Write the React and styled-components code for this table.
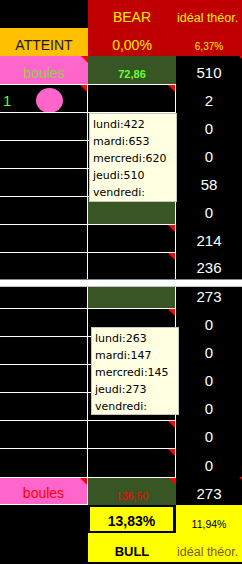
import React from "react";
import styled, { createGlobalStyle, css } from "styled-components";

const GlobalStyle = createGlobalStyle`
  html, body {
    margin: 0;
    padding: 0;
    background: #000;
    overflow: hidden;
  }
  body {
    font-family: "Liberation Sans", Arial, sans-serif;
  }
`;

const Sheet = styled.div`
  position: relative;
  width: 242px;
  height: 564px;
  overflow: hidden;
  background: #000;
`;

const Row = styled.div`
  display: grid;
  grid-template-columns: 88px 88px 66px;
  height: ${(p) => p.$h || 28}px;
`;

const line = "1px solid #fff";

const Cell = styled.div`
  position: relative;
  box-sizing: border-box;
  display: flex;
  align-items: flex-end;
  justify-content: ${(p) => p.$align || "center"};
  padding: 0 0 4px ${(p) => p.$pl || 0}px;
  background: ${(p) => p.$bg || "#000"};
  color: ${(p) => p.$color || "#fff"};
  font-size: ${(p) => p.$size || 15}px;
  font-weight: ${(p) => (p.$bold ? 700 : 400)};
  line-height: 1;
  white-space: nowrap;
  border-top: ${(p) => (p.$bt ? line : "none")};
  border-right: ${(p) => (p.$br ? line : "none")};
  border-bottom: ${(p) => (p.$bb ? line : "none")};

  ${(p) =>
    p.$boxed &&
    css`
      border: 2px solid #000;
      border-right-width: 3px;
      padding-bottom: 3px;
    `}

  ${(p) =>
    p.$note &&
    css`
      &::after {
        content: "";
        position: absolute;
        top: 0;
        right: ${p.$noteOut ? -4 : 0}px;
        width: 0;
        height: 0;
        border-left: 7px solid transparent;
        border-top: 7px solid #ff0000;
      }
    `}
`;

const Split = styled.div`
  box-sizing: border-box;
  height: 8px;
  background: #fff;
  border-top: 1px solid #858585;
  border-bottom: 1px solid #c4c4c4;
`;

const Dot = styled.span`
  position: absolute;
  left: 36px;
  top: 3px;
  width: 27px;
  height: 25px;
  border-radius: 50%;
  background: #ff66cc;
`;

const Comment = styled.div`
  position: absolute;
  left: ${(p) => p.$x}px;
  top: ${(p) => p.$y}px;
  box-sizing: border-box;
  width: 88px;
  height: ${(p) => p.$h}px;
  padding: 2px 3px;
  background: #ffffe1;
  border: 1px solid #c8c8b8;
  font-family: "DejaVu Sans", Tahoma, sans-serif;
  font-size: 11px;
  line-height: 17px;
  color: #000;
  white-space: nowrap;
  overflow: hidden;
`;

const pink = "#ff66cc";
const red = "#c00000";
const green = "#375623";
const yellow = "#ffff00";
const gold = "#ffeb00";

const upper = [
  { v: "2", note: true, dot: true },
  { v: "0" },
  { v: "0" },
  { v: "58" },
  { v: "0", green: true },
  { v: "214", noteB: true },
  { v: "236", noteB: true, h: 27 },
];

const lower = [
  { v: "273", green: true, h: 21, noTop: true },
  { v: "0", noteB: true },
  { v: "0" },
  { v: "0" },
  { v: "0" },
  { v: "0", noteB: true },
  { v: "0", noteB: true, h: 29 },
];

const GridRow = ({ r }) => (
  <Row $h={r.h}>
    <Cell $bt={!r.noTop} $br $note={r.note} $align="flex-start" $pl={3} $color="#5cff3a">
      {r.dot && (
        <>
          1
          <Dot />
        </>
      )}
    </Cell>
    <Cell $bt={!r.noTop} $br $bg={r.green ? green : "#000"} $note={r.note || r.noteB} />
    <Cell>{r.v}</Cell>
  </Row>
);

const Comments = ({ x, y, h, days }) => (
  <Comment $x={x} $y={y} $h={h}>
    {days.map((d, i) => (
      <div key={i}>{d}</div>
    ))}
  </Comment>
);

export default function App() {
  return (
    <Sheet>
      <GlobalStyle />
      <Row>
        <Cell />
        <Cell $bg={red} $color={gold} $size={14}>
          BEAR
        </Cell>
        <Cell $bg={red} $color={gold} $size={12.5} $align="flex-start" $pl={1}>
          idéal théor.
        </Cell>
      </Row>
      <Row>
        <Cell $bg="#ffc000" $color="#1a1a1a" $size={14}>
          ATTEINT
        </Cell>
        <Cell $bg={red} $color={gold} $size={14}>
          0,00%
        </Cell>
        <Cell $bg={red} $color={gold} $size={10}>
          6,37%
        </Cell>
      </Row>
      <Row>
        <Cell $bg={pink} $color="#92d050" $size={14} $note>
          boules
        </Cell>
        <Cell $bg={green} $color="#66ff33" $size={11} $bold>
          72,86
        </Cell>
        <Cell $note $noteOut>
          510
        </Cell>
      </Row>
      {upper.map((r, i) => (
        <GridRow key={"u" + i} r={r} />
      ))}
      <Split />
      {lower.map((r, i) => (
        <GridRow key={"l" + i} r={r} />
      ))}
      <Row>
        <Cell $bt $br $bb $bg={pink} $color="#ff0000" $size={14} $note>
          boules
        </Cell>
        <Cell $bt $bg={green} $color="#ff0000" $size={10.5} $note>
          136,50
        </Cell>
        <Cell $note $noteOut>
          273
        </Cell>
      </Row>
      <Row>
        <Cell />
        <Cell $boxed $bg={yellow} $color="#000" $size={14} $bold>
          13,83%
        </Cell>
        <Cell $bg={yellow} $color="#000" $size={10.5}>
          11,94%
        </Cell>
      </Row>
      <Row $h={29}>
        <Cell />
        <Cell $bg={yellow} $color="#000" $size={13} $bold>
          BULL
        </Cell>
        <Cell $bg={yellow} $color="#7f6000" $size={12.5} $align="flex-start" $pl={1}>
          idéal théor.
        </Cell>
      </Row>

      <Comments
        x={89}
        y={113}
        h={89}
        days={["lundi:422", "mardi:653", "mercredi:620", "jeudi:510", "vendredi:"]}
      />
      <Comments
        x={91}
        y={327}
        h={88}
        days={["lundi:263", "mardi:147", "mercredi:145", "jeudi:273", "vendredi:"]}
      />
    </Sheet>
  );
}
